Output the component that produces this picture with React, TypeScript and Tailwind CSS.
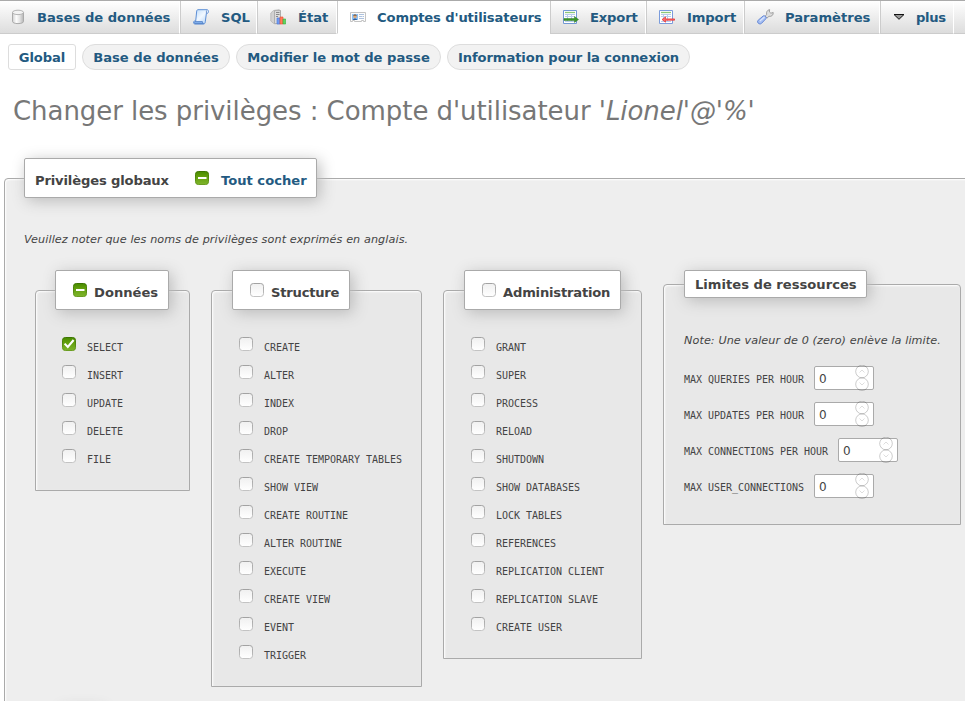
import type { ReactNode } from 'react';

const DatabaseIcon = () => (
  <svg width="16" height="16" viewBox="0 0 16 16">
    <defs>
      <linearGradient id="db" x1="0" x2="1" y1="0" y2="0">
        <stop offset="0" stopColor="#cfcfcf" />
        <stop offset="0.35" stopColor="#fdfdfd" />
        <stop offset="0.65" stopColor="#e4e4e4" />
        <stop offset="1" stopColor="#b5b5b5" />
      </linearGradient>
    </defs>
    <path d="M3.5 3.4v9c0 1.4 2.4 2.2 5.5 2.2s5.5-.8 5.5-2.2v-9z" fill="url(#db)" stroke="#aaa" />
    <ellipse cx="9" cy="3.4" rx="5.5" ry="2.2" fill="#f3f3f3" stroke="#b5b5b5" />
  </svg>
);

const ScrollIcon = () => (
  <svg width="16" height="16" viewBox="0 0 16 16">
    <defs>
      <linearGradient id="sc" x1="0" x2="1" y1="0" y2="1">
        <stop offset="0" stopColor="#b9d9fb" />
        <stop offset="0.5" stopColor="#f1f8ff" />
        <stop offset="1" stopColor="#a9cdf6" />
      </linearGradient>
    </defs>
    <path d="M4.8.7h9.5c1.5.3 1.5 3.2.2 3.6h-1.1l-1.1 8.4c-.2 1.6-.7 2.3-1.9 2.3H1.8C.2 15-.1 12.2 1.6 12h1.1L3.6 3C3.7 1.6 4 .8 4.8.7z" fill="url(#sc)" stroke="#5d8fd6" />
    <path d="M1.8 12.6h7.6c.2 1.1.5 1.8 1.1 2H2c-.9-.2-1-1.6-.2-2zM13.4 4.2V1.5" fill="#83b2ee" stroke="#3f70bb" strokeWidth=".7" />
  </svg>
);

const StatusIcon = () => (
  <svg width="16" height="16" viewBox="0 0 16 16">
    <path d="M3.5 1.5 9 .7l1.5 1v13H4L.8 12V4z" fill="#d2d2d2" stroke="#b5b5b5" strokeWidth=".8" />
    <path d="M4.5 1.6h6v13h-6z" fill="#dcdcdc" stroke="#a5a5a5" strokeWidth=".8" />
    <path d="M6 3.5h3.5M6 5.5h3.5M6 7.5h2" stroke="#8a8a8a" />
    <path d="M7 9h3v6H7z" fill="#6e9df2" stroke="#4b77da" strokeWidth=".6" />
    <path d="M10 8h3v7h-3z" fill="#ff7d5c" stroke="#ee4a2e" strokeWidth=".6" />
    <path d="M13 10h2.7v5H13z" fill="#61d561" stroke="#35ad3b" strokeWidth=".6" />
  </svg>
);

const CardIcon = () => (
  <svg width="16" height="16" viewBox="0 0 16 16">
    <path d="M.5 3.5h15v9h-2v-1h-2v1h-7v-1h-2v1h-2z" fill="#fcfcfc" stroke="#c3c3c3" />
    <path d="M2 5h6v6H2z" fill="#8dc1f4" />
    <path d="M3 11c0-2 4-2 4 0z" fill="#315f9e" />
    <circle cx="5" cy="7.5" r="1.7" fill="#dfa878" />
    <path d="M3.3 7.2c0-2.4 3.4-2.4 3.4 0C5.5 6.4 4.5 6.4 3.3 7.2z" fill="#755032" />
    <path d="M9 5.5h5M9 7.5h3.5M13 7.5h1M9 9.5h5" stroke="#adc2df" />
  </svg>
);

const TransferIcon = ({ incoming = false }: { incoming?: boolean }) => (
  <svg width="16" height="16" viewBox="0 0 16 16">
    <path d="M.5 1.5h13v13H.5z" fill="#fff" stroke={incoming ? '#7b9cdc' : '#7299d4'} />
    <path d="M2 3.5h10" stroke="#8bc879" strokeWidth="1.3" />
    <path d="M2 5.5h10M2 7.5h10M2 12.5h10M4.5 5v8M8.5 5v8" stroke="#b9cdec" />
    {incoming ? (
      <path d="M3 10.5 6.5 7.9v2h9v1.3h-9v2z" fill="#f87070" stroke="#e72b2b" strokeWidth=".7" />
    ) : (
      <path d="M1 9.6h10.5V7.6l4 2.9-4 2.9v-2H1z" fill="#3c982b" stroke="#2a7620" strokeWidth=".5" />
    )}
  </svg>
);

const WrenchIcon = () => (
  <svg width="17" height="16" viewBox="0 0 17 16">
    <path d="M8.2 7.2 9.7 5.3C9 3.3 10.3 1 12.6.6L12.4 3l1.5 1.2 2.3-.7c.4 2.2-1.6 4.5-4.2 3.8l-2 1.8z" fill="#dedede" stroke="#999" strokeWidth=".9" />
    <path d="M1.2 11.2 6.3 6.9c1.5-.8 3.4 1.2 2.7 2.7l-4.4 4.7c-2.2 2-5.4-1.1-3.4-3.1z" fill="#a6bff3" stroke="#6688d6" />
    <path d="m2.9 12 4.6-4" stroke="#dce7ff" strokeWidth="1.1" />
  </svg>
);

const MoreIcon = () => (
  <svg width="12" height="16" viewBox="0 0 12 16">
    <path d="M1 5.5h10L6 10.3z" fill="#999" stroke="#111" />
  </svg>
);

function Check({ state }: { state?: 'checked' | 'mixed' }) {
  const on = state !== undefined;
  return (
    <svg width="16" height="16" viewBox="-1 -1 16 16" className="-m-px shrink-0">
      <defs>
        <linearGradient id="ckOn" x1="0" x2="0" y1="0" y2="1">
          <stop offset="0" stopColor="#478a00" />
          <stop offset="0.3" stopColor="#5d9b08" />
          <stop offset="1" stopColor="#7fb52c" />
        </linearGradient>
        <linearGradient id="ckOff" x1="0" x2="0" y1="0" y2="1">
          <stop offset="0" stopColor="#f0f0f0" />
          <stop offset="1" stopColor="#fff" />
        </linearGradient>
        <linearGradient id="ckEdge" x1="0" x2="0" y1="0" y2="1">
          <stop offset="0" stopColor="#a2a2a2" />
          <stop offset="1" stopColor="#c3c3c3" />
        </linearGradient>
        <linearGradient id="ckOnEdge" x1="0" x2="0" y1="0" y2="1">
          <stop offset="0" stopColor="#3c7500" />
          <stop offset="1" stopColor="#6b9d22" />
        </linearGradient>
      </defs>
      <rect x=".5" y=".5" width="13" height="13" rx="2.8" fill={on ? 'url(#ckOn)' : 'url(#ckOff)'} stroke={on ? 'url(#ckOnEdge)' : 'url(#ckEdge)'} />
      {state === 'mixed' && <path d="M3 6h8.5v2H3z" fill="#fff" />}
      {state === 'checked' && <path d="m2.6 6.6 3.2 3.4 5.8-7" fill="none" stroke="#fff" strokeWidth="2.1" />}
    </svg>
  );
}

function Tab({ icon, label, className }: { icon: ReactNode; label: string; className: string }) {
  return (
    <a className={`flex h-[33px] shrink-0 items-center gap-[11px] border-b border-b-[#ccc] ${className}`}>
      {icon}
      <span className="pt-0.5 whitespace-nowrap">{label}</span>
    </a>
  );
}

const tabTone = 'border-l border-l-[#ccc] border-r border-r-white pl-3 bg-linear-to-b from-white to-[#dcdcdc]';

function Panel({
  title,
  head,
  className,
  legendClass,
  children,
}: {
  title: string;
  head?: ReactNode;
  className: string;
  legendClass: string;
  children: ReactNode;
}) {
  return (
    <section className={`shrink-0 rounded-t border border-[#aaa] bg-[#e8e8e8] shadow-[inset_1px_1px_2px_#fff] ${className}`}>
      <h3 className={`flex rounded-xs border border-[#aaa] bg-white text-[13.12px] leading-4 font-bold shadow-[3px_3px_15px_#bbb] ${legendClass}`}>
        {head}
        <span className="whitespace-nowrap">{title}</span>
      </h3>
      {children}
    </section>
  );
}

function Privileges({ names, checked, className }: { names: string[]; checked?: string; className: string }) {
  return (
    <ul className={`mt-[27px] flex flex-col ${className}`}>
      {names.map((n) => (
        <li key={n} className="flex h-7 items-start gap-[11px]">
          <Check state={n === checked ? 'checked' : undefined} />
          <code className="mt-[5px] font-['DejaVu_Sans_Mono',monospace] text-[10px] leading-3 tracking-[-0.02px] whitespace-nowrap">{n}</code>
        </li>
      ))}
    </ul>
  );
}

const data = ['SELECT', 'INSERT', 'UPDATE', 'DELETE', 'FILE'];
const structure = ['CREATE', 'ALTER', 'INDEX', 'DROP', 'CREATE TEMPORARY TABLES', 'SHOW VIEW', 'CREATE ROUTINE', 'ALTER ROUTINE', 'EXECUTE', 'CREATE VIEW', 'EVENT', 'TRIGGER'];
const admin = ['GRANT', 'SUPER', 'PROCESS', 'RELOAD', 'SHUTDOWN', 'SHOW DATABASES', 'LOCK TABLES', 'REFERENCES', 'REPLICATION CLIENT', 'REPLICATION SLAVE', 'CREATE USER'];
const limits = ['MAX QUERIES PER HOUR', 'MAX UPDATES PER HOUR', 'MAX CONNECTIONS PER HOUR', 'MAX USER_CONNECTIONS'];

function Spinner() {
  return (
    <svg width="14" height="26" viewBox="0 0 14 26" fill="none" stroke="#000" strokeOpacity=".2" className="mr-[4px] shrink-0">
      <circle cx="7" cy="6.5" r="6.3" />
      <circle cx="7" cy="19.2" r="6.3" />
      <path d="m4.5 7.5 2.5-2.5 2.5 2.5M4.5 17.5 7 20l2.5-2.5" strokeOpacity=".13" />
    </svg>
  );
}

const subTone = 'flex h-[26px] items-center justify-center whitespace-nowrap border border-[#ddd] pt-0.5';
const noteTone = 'text-[11.2px] leading-4 tracking-[0.095px] whitespace-nowrap italic';

export default function App() {
  return (
    <div className="h-[701px] w-[965px] overflow-hidden bg-white font-['DejaVu_Sans',sans-serif] text-[13.12px] text-[#444]">
      <nav className="flex h-[34px] border-t border-[#aaa] bg-linear-to-b from-white to-[#dcdcdc] font-bold text-[#235a81]">
        <Tab icon={<DatabaseIcon />} label="Bases de données" className="w-[180px] border-r border-r-white pl-[9px] [&>span]:pl-px" />
        <Tab icon={<ScrollIcon />} label="SQL" className={`w-[77px] ${tabTone} [&>span]:pl-px`} />
        <Tab icon={<StatusIcon />} label="État" className={`w-[80px] ${tabTone} [&>span]:pl-px`} />
        <Tab icon={<CardIcon />} label="Comptes d'utilisateurs" className="w-[213px] border-l border-b-white border-l-[#ccc] bg-white pl-3 tracking-[-0.12px]" />
        <Tab icon={<TransferIcon />} label="Export" className={`w-[96px] ${tabTone} tracking-[-0.15px]`} />
        <Tab icon={<TransferIcon incoming />} label="Import" className={`w-[98px] ${tabTone} [&>span]:pl-px tracking-[-0.1px]`} />
        <Tab icon={<WrenchIcon />} label="Paramètres" className={`w-[136px] ${tabTone}`} />
        <Tab icon={<MoreIcon />} label="plus" className={`w-[74px] ${tabTone} gap-[10px] tracking-[-0.3px]`} />
        <div className="flex-1 border-b border-[#ccc]" />
      </nav>

      <nav className="flex gap-1.5 pt-2.5 pl-2 font-bold text-[#235a81]">
        <a className={`w-[68px] rounded-[3px] bg-white tracking-[-0.1px] ${subTone}`}>Global</a>
        <a className={`w-[148px] rounded-full bg-[#f2f2f2] ${subTone}`}>Base de données</a>
        <a className={`w-[205px] rounded-full bg-[#f2f2f2] ${subTone}`}>Modifier le mot de passe</a>
        <a className={`w-[243px] rounded-full bg-[#f2f2f2] tracking-[-0.09px] ${subTone}`}>Information pour la connexion</a>
      </nav>

      <h2 className="mt-[25px] ml-[13px] text-[26px] leading-8 tracking-[-0.06px] whitespace-nowrap text-[#777]">
        Changer les privilèges : Compte d'utilisateur <i>'Lionel'@'%'</i>
      </h2>

      <main className="mt-[51px] ml-1 h-[600px] w-[980px] rounded-t border border-[#aaa] bg-[#eee] shadow-[inset_1px_1px_2px_#fff]">
        <h3 className="-mt-[21px] ml-[19px] flex h-10 w-[293px] rounded-xs border border-[#aaa] bg-white pt-[12px] pl-[10px] leading-4 font-bold shadow-[3px_3px_15px_#bbb]">
          <span className="w-[160px] pt-0.5 tracking-[-0.15px] whitespace-nowrap">Privilèges globaux</span>
          <Check state="mixed" />
          <span className="pt-0.5 pl-3 whitespace-nowrap text-[#235a81]">Tout cocher</span>
        </h3>
        <p className={`mt-[34px] ml-[19px] ${noteTone}`}>
          Veuillez noter que les noms de privilèges sont exprimés en anglais.
        </p>
        <div className="mt-[42px] ml-[30px] flex items-start gap-[21px]">
          <Panel title="Données" head={<Check state="mixed" />} className="h-[201px] w-[155px]" legendClass="-mt-[21px] ml-[19px] h-10 w-[114px] gap-[7px] pt-[12px] pl-[17px] [&>span]:pt-0.5">
            <Privileges names={data} checked="SELECT" className="pl-[26px]" />
          </Panel>
          <Panel title="Structure" head={<Check />} className="h-[397px] w-[211px]" legendClass="-mt-[21px] ml-5 h-10 w-[118px] gap-[7px] pt-[12px] pl-[17px] tracking-[-0.22px] [&>span]:pt-0.5">
            <Privileges names={structure} className="pl-[27px]" />
          </Panel>
          <Panel title="Administration" head={<Check />} className="h-[369px] w-[199px]" legendClass="-mt-[21px] ml-5 h-10 w-[157px] gap-[7px] pt-[12px] pl-[17px] tracking-[-0.2px] [&>span]:pt-0.5">
            <Privileges names={admin} className="pl-[27px]" />
          </Panel>
          <Panel title="Limites de ressources" className="-mt-1.5 h-[241px] w-[298px]" legendClass="-mt-[15px] ml-5 h-7 w-[183px] pt-1.5 pl-[10px]">
            <p className={`mt-[35px] ml-5 ${noteTone}`}>Note: Une valeur de 0 (zero) enlève la limite.</p>
            <div className="mt-[17px] ml-5 flex flex-col gap-3">
              {limits.map((l) => (
                <label key={l} className="flex h-6 items-center gap-[10px]">
                  <code className="pt-1 font-['DejaVu_Sans_Mono',monospace] text-[10px] leading-3 tracking-[-0.02px] whitespace-nowrap">{l}</code>
                  <span className="flex h-6 w-[60px] items-center justify-between rounded-xs border border-[#aaa] bg-white pl-1 text-xs">
                    <span className="pt-0.5">0</span>
                    <Spinner />
                  </span>
                </label>
              ))}
            </div>
          </Panel>
        </div>
        <div className="mt-5 ml-[54px] h-10 w-[42px] shadow-[3px_3px_15px_#bbb]" />
      </main>
    </div>
  );
}
